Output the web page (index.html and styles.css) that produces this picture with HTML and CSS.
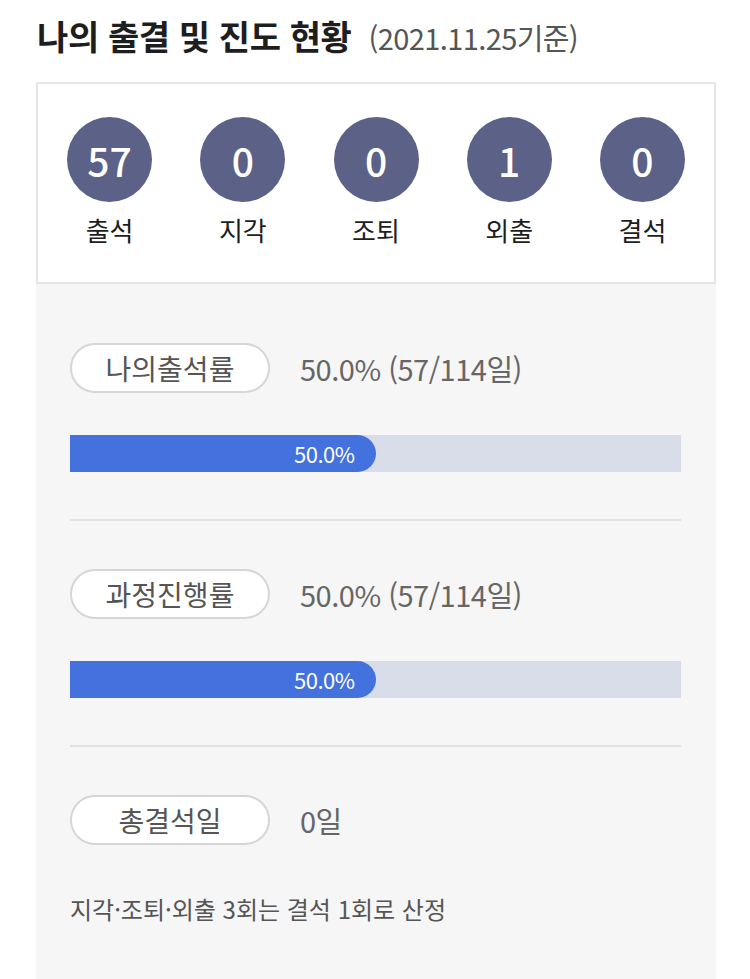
FILE: index.html
```html
<!DOCTYPE html>
<html lang="ko">
<head>
    <meta charset="UTF-8">
    <meta name="viewport" content="width=device-width, initial-scale=1.0">
    <title>나의 출결 및 진도 현황</title>
    <link rel="stylesheet" href="styles.css">
</head>
<body>
    <h1 class="title">나의 출결 및 진도 현황 <span class="date">(2021.11.25기준)</span></h1>

    <div class="summary">
        <div class="stat"><div class="circle">57</div><div class="stat-label">출석</div></div>
        <div class="stat"><div class="circle">0</div><div class="stat-label">지각</div></div>
        <div class="stat"><div class="circle">0</div><div class="stat-label">조퇴</div></div>
        <div class="stat"><div class="circle">1</div><div class="stat-label">외출</div></div>
        <div class="stat"><div class="circle">0</div><div class="stat-label">결석</div></div>
    </div>

    <div class="detail">
        <div class="row">
            <span class="pill">나의출석률</span>
            <span class="value">50.0% (57/114일)</span>
        </div>
        <div class="bar"><div class="fill" style="width: 50%">50.0%</div></div>
        <hr class="divider">

        <div class="row">
            <span class="pill">과정진행률</span>
            <span class="value">50.0% (57/114일)</span>
        </div>
        <div class="bar"><div class="fill" style="width: 50%">50.0%</div></div>
        <hr class="divider">

        <div class="row">
            <span class="pill">총결석일</span>
            <span class="value">0일</span>
        </div>
        <p class="note">지각·조퇴·외출 3회는 결석 1회로 산정</p>
    </div>
</body>
</html>
```

FILE: styles.css
```css
body {
    margin: 0;
    padding: 0 34px 0 36px;
    background: #fff;
    font-family: "Noto Sans CJK KR", "Noto Sans", sans-serif;
    color: #222;
}
.title {
    margin: 0;
    padding: 12px 0 22px 1px;
    height: 48px;
    font-size: 34px;
    font-weight: 700;
    line-height: 48px;
    letter-spacing: -0.4px;
    color: #1e1e1e;
}
.date {
    margin-left: 8px;
    font-size: 29px;
    font-weight: 400;
    color: #555;
    letter-spacing: -0.6px;
}
.summary {
    display: flex;
    padding: 33px 5px 32px;
    border: 2px solid #e6e6e6;
    background: #fff;
}
.stat {
    flex: 1;
    display: flex;
    flex-direction: column;
    align-items: center;
}
.circle {
    width: 85px;
    height: 85px;
    border-radius: 50%;
    background: #5b6187;
    color: #fff;
    font-size: 39px;
    font-weight: 500;
    display: flex;
    align-items: center;
    justify-content: center;
}
.stat-label {
    margin-top: 8px;
    font-size: 26px;
    line-height: 40px;
    color: #1e1e1e;
}
.detail {
    background: #f6f6f6;
    padding: 59px 35px 60px 34px;
}
.row {
    display: flex;
    align-items: center;
    gap: 30px;
}
.pill {
    box-sizing: border-box;
    width: 200px;
    height: 50px;
    border: 2px solid #d6d6d6;
    border-radius: 25px;
    background: #fff;
    display: flex;
    align-items: center;
    justify-content: center;
    font-size: 28px;
    color: #555;
}
.value {
    font-size: 29px;
    color: #666;
    letter-spacing: -0.5px;
}
.bar {
    margin-top: 42px;
    height: 37px;
    background: #d9ddea;
}
.fill {
    box-sizing: border-box;
    height: 100%;
    background: #4371dd;
    border-radius: 0 19px 19px 0;
    color: #fff;
    font-size: 22px;
    line-height: 37px;
    text-align: right;
    padding-right: 21px;
    letter-spacing: -0.5px;
}
.divider {
    margin: 47px 0 48px;
    border: 0;
    border-top: 2px solid #e2e2e2;
}
.note {
    margin: 46px 0 0;
    font-size: 24px;
    color: #555;
    letter-spacing: 0;
}
```
